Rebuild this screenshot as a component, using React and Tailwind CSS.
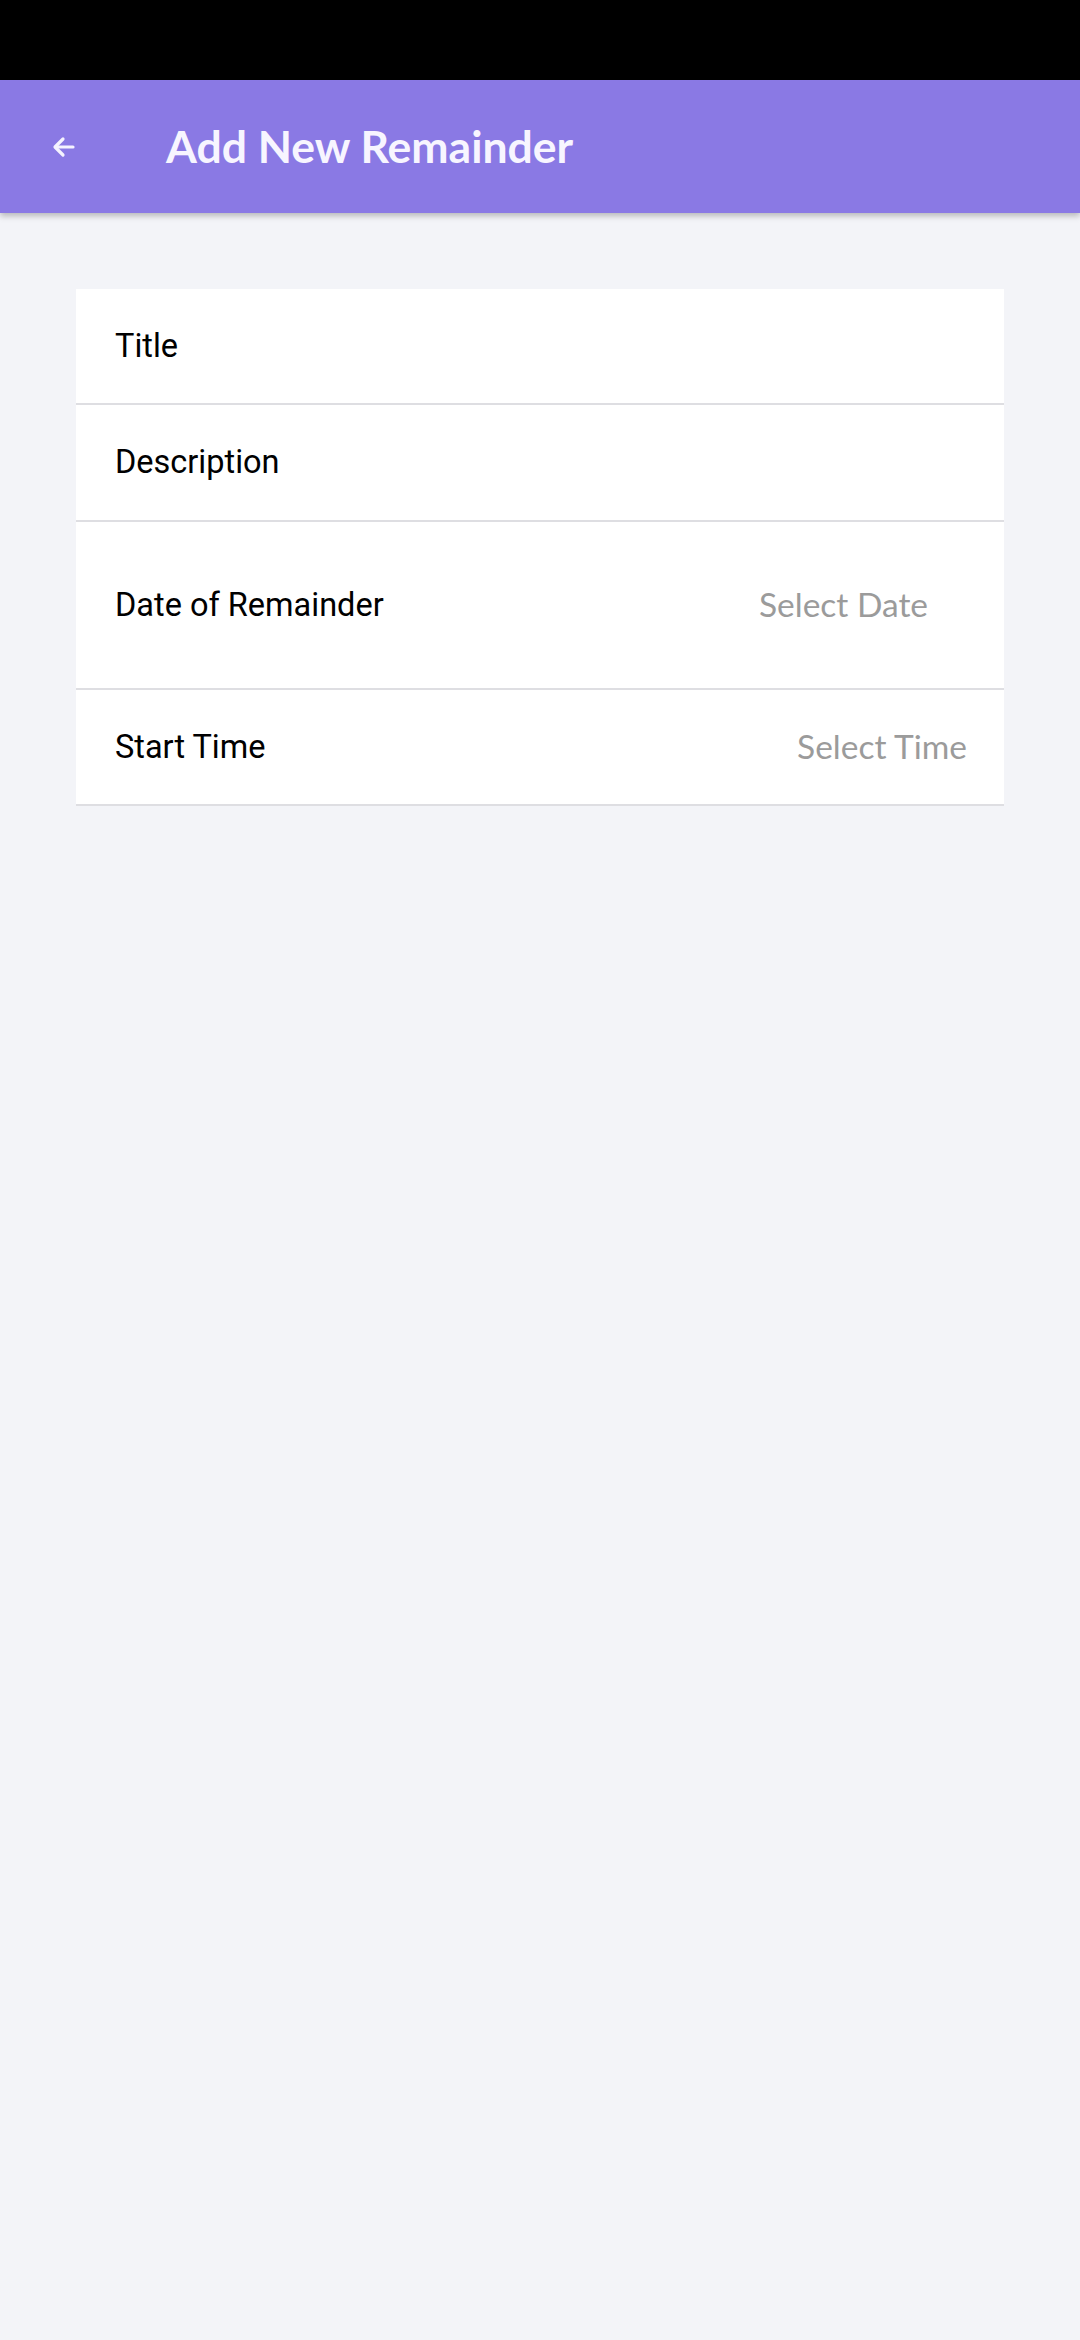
import React from 'react'

const ROWS = [
  { label: 'Title', h: 'h-[116px]' },
  { label: 'Description', h: 'h-[117px]' },
  { label: 'Date of Remainder', h: 'h-[168px]', hint: 'Select Date', pr: 'pr-[76px]' },
  { label: 'Start Time', h: 'h-[116px]', hint: 'Select Time', pr: 'pr-[37px]' },
]

export default function App() {
  return (
    <div className="min-h-[2340px] w-[1080px] bg-[#f3f4f8]">
      {/* status bar */}
      <div className="h-[80px] bg-black" />

      {/* app bar */}
      <div className="flex h-[133px] items-center bg-[#8a79e4] shadow-[0_3px_6px_rgba(0,0,0,0.25)]">
        <div className="flex w-[166px] items-center pl-[52px]">
          <svg width="24" height="24" viewBox="0 0 24 24" fill="none" stroke="#f5f3ff" strokeWidth="3.2" strokeLinecap="round" strokeLinejoin="round">
            <path d="M21 12H4" />
            <path d="M11 4l-8 8 8 8" />
          </svg>
        </div>
        <div className="text-[44.5px] font-bold text-[#f7f5ff]" style={{ fontFamily: 'Lato, "Open Sans", sans-serif' }}>
          Add New Remainder
        </div>
      </div>

      {/* form */}
      <div className="mx-[76px] mt-[76px] bg-white">
        {ROWS.map(r => (
          <div key={r.label} className={`flex items-center justify-between border-b-2 border-[#dedee2] ${r.h} ${r.pr || ''}`}>
            <span className="pl-[39px] text-[32.5px] text-black" style={{ fontFamily: 'Roboto, sans-serif' }}>{r.label}</span>
            {r.hint && (
              <span className="-translate-y-[1px] text-[33.5px] text-[#9b9b9b]" style={{ fontFamily: 'Lato, "Open Sans", sans-serif' }}>{r.hint}</span>
            )}
          </div>
        ))}
      </div>
    </div>
  )
}
